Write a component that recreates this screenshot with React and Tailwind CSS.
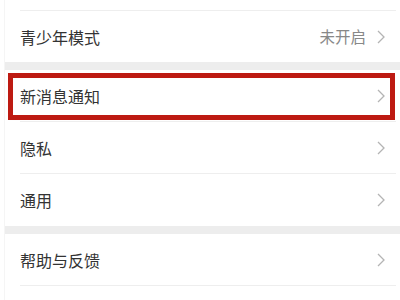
import React from "react";

const Chevron = () => (
  <svg width="8" height="14" viewBox="0 0 8 14" className="shrink-0">
    <path d="M1 1 L7 7 L1 13" fill="none" stroke="#b4b4b4" strokeWidth="1.3" />
  </svg>
);

const Row = ({ label, value, border = true, h = "h-[52px]" }) => (
  <div className="pl-[15px]">
    <div className={`${h} flex items-center pr-[11px] ${border ? "border-b border-[#eeeeee]" : ""}`}>
      <span className="flex-1 text-[16px] text-[#333333]">{label}</span>
      {value && <span className="text-[15.5px] text-[#888888] mr-[11px]">{value}</span>}
      <Chevron />
    </div>
  </div>
);

export default function App() {
  return (
    <div
      className="w-[400px] h-[300px] bg-white relative overflow-hidden"
      style={{ fontFamily: '"Noto Sans CJK SC", "Noto Sans", sans-serif' }}
    >
      <div className="ml-[4px] mr-[4px] border-l border-[#f5f5f5] h-full bg-white">
        <div className="pl-[15px]">
          <div className="h-[11px] border-b border-[#eeeeee]" />
        </div>
        <Row label="青少年模式" value="未开启" border={false} h="h-[51px]" />
        <div className="h-[8px] bg-[#ededed] -mr-[4px]" />
        <Row label="新消息通知" />
        <Row label="隐私" />
        <Row label="通用" border={false} />
        <div className="h-[8px] bg-[#ededed] -mr-[4px]" />
        <Row label="帮助与反馈" />
      </div>
      <div className="absolute left-[8px] top-[73px] w-[387px] h-[47px] border-[5px] border-[#bd1a12]" />
    </div>
  );
}
